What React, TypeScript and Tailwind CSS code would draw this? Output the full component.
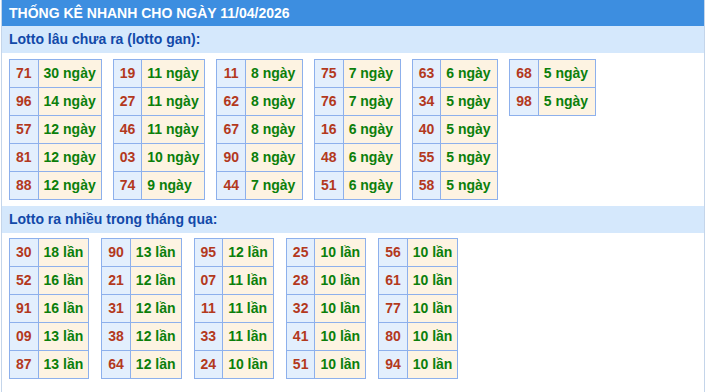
const ganGroups: [string, number][][] = [
  [["71", 30], ["96", 14], ["57", 12], ["81", 12], ["88", 12]],
  [["19", 11], ["27", 11], ["46", 11], ["03", 10], ["74", 9]],
  [["11", 8], ["62", 8], ["67", 8], ["90", 8], ["44", 7]],
  [["75", 7], ["76", 7], ["16", 6], ["48", 6], ["51", 6]],
  [["63", 6], ["34", 5], ["40", 5], ["55", 5], ["58", 5]],
  [["68", 5], ["98", 5]],
];

const hotGroups: [string, number][][] = [
  [["30", 18], ["52", 16], ["91", 16], ["09", 13], ["87", 13]],
  [["90", 13], ["21", 12], ["31", 12], ["38", 12], ["64", 12]],
  [["95", 12], ["07", 11], ["11", 11], ["33", 11], ["24", 10]],
  [["25", 10], ["28", 10], ["32", 10], ["41", 10], ["51", 10]],
  [["56", 10], ["61", 10], ["77", 10], ["80", 10], ["94", 10]],
];

function StatTable({ rows, unit, wide }: { rows: [string, number][]; unit: string; wide?: boolean }) {
  return (
    <table className="border-collapse">
      <tbody>
        {rows.map(([num, count]) => (
          <tr key={num}>
            <td className="border border-[#8db0ec] bg-[#e3effd] text-[#b3391d] px-[6px] h-[28px] text-center">
              {num}
            </td>
            <td
              className={
                "border border-[#8db0ec] bg-[#fdf3e2] text-[#0b7f0b] px-[5px] h-[28px] text-left whitespace-nowrap " +
                (wide ? "w-[57px]" : "")
              }
            >
              {count} {unit}
            </td>
          </tr>
        ))}
      </tbody>
    </table>
  );
}

function SectionTitle({ children }: { children: React.ReactNode }) {
  return (
    <div className="h-[27px] bg-[#d5e8fc] text-[#1249a9] px-[7px] flex items-center">
      {children}
    </div>
  );
}

export default function App() {
  return (
    <div
      className="ml-px w-[704px] min-h-[392px] border-x border-[#c4d5ea] bg-white font-bold text-[14px]"
      style={{ fontFamily: '"Liberation Sans", Arial, sans-serif' }}
    >
      <div className="h-[26px] bg-[#3d8ee0] text-white px-[7px] flex items-center">
        THỐNG KÊ NHANH CHO NGÀY 11/04/2026
      </div>

      <SectionTitle>Lotto lâu chưa ra (lotto gan):</SectionTitle>
      <div className="flex items-start gap-[11px] px-[7px] pt-[6px] pb-[6px]">
        {ganGroups.map((g, i) => (
          <StatTable key={i} rows={g} unit="ngày" wide />
        ))}
      </div>

      <SectionTitle>Lotto ra nhiều trong tháng qua:</SectionTitle>
      <div className="flex items-start gap-[12px] px-[7px] pt-[5px] pb-[6px]">
        {hotGroups.map((g, i) => (
          <StatTable key={i} rows={g} unit="lần" />
        ))}
      </div>
    </div>
  );
}
